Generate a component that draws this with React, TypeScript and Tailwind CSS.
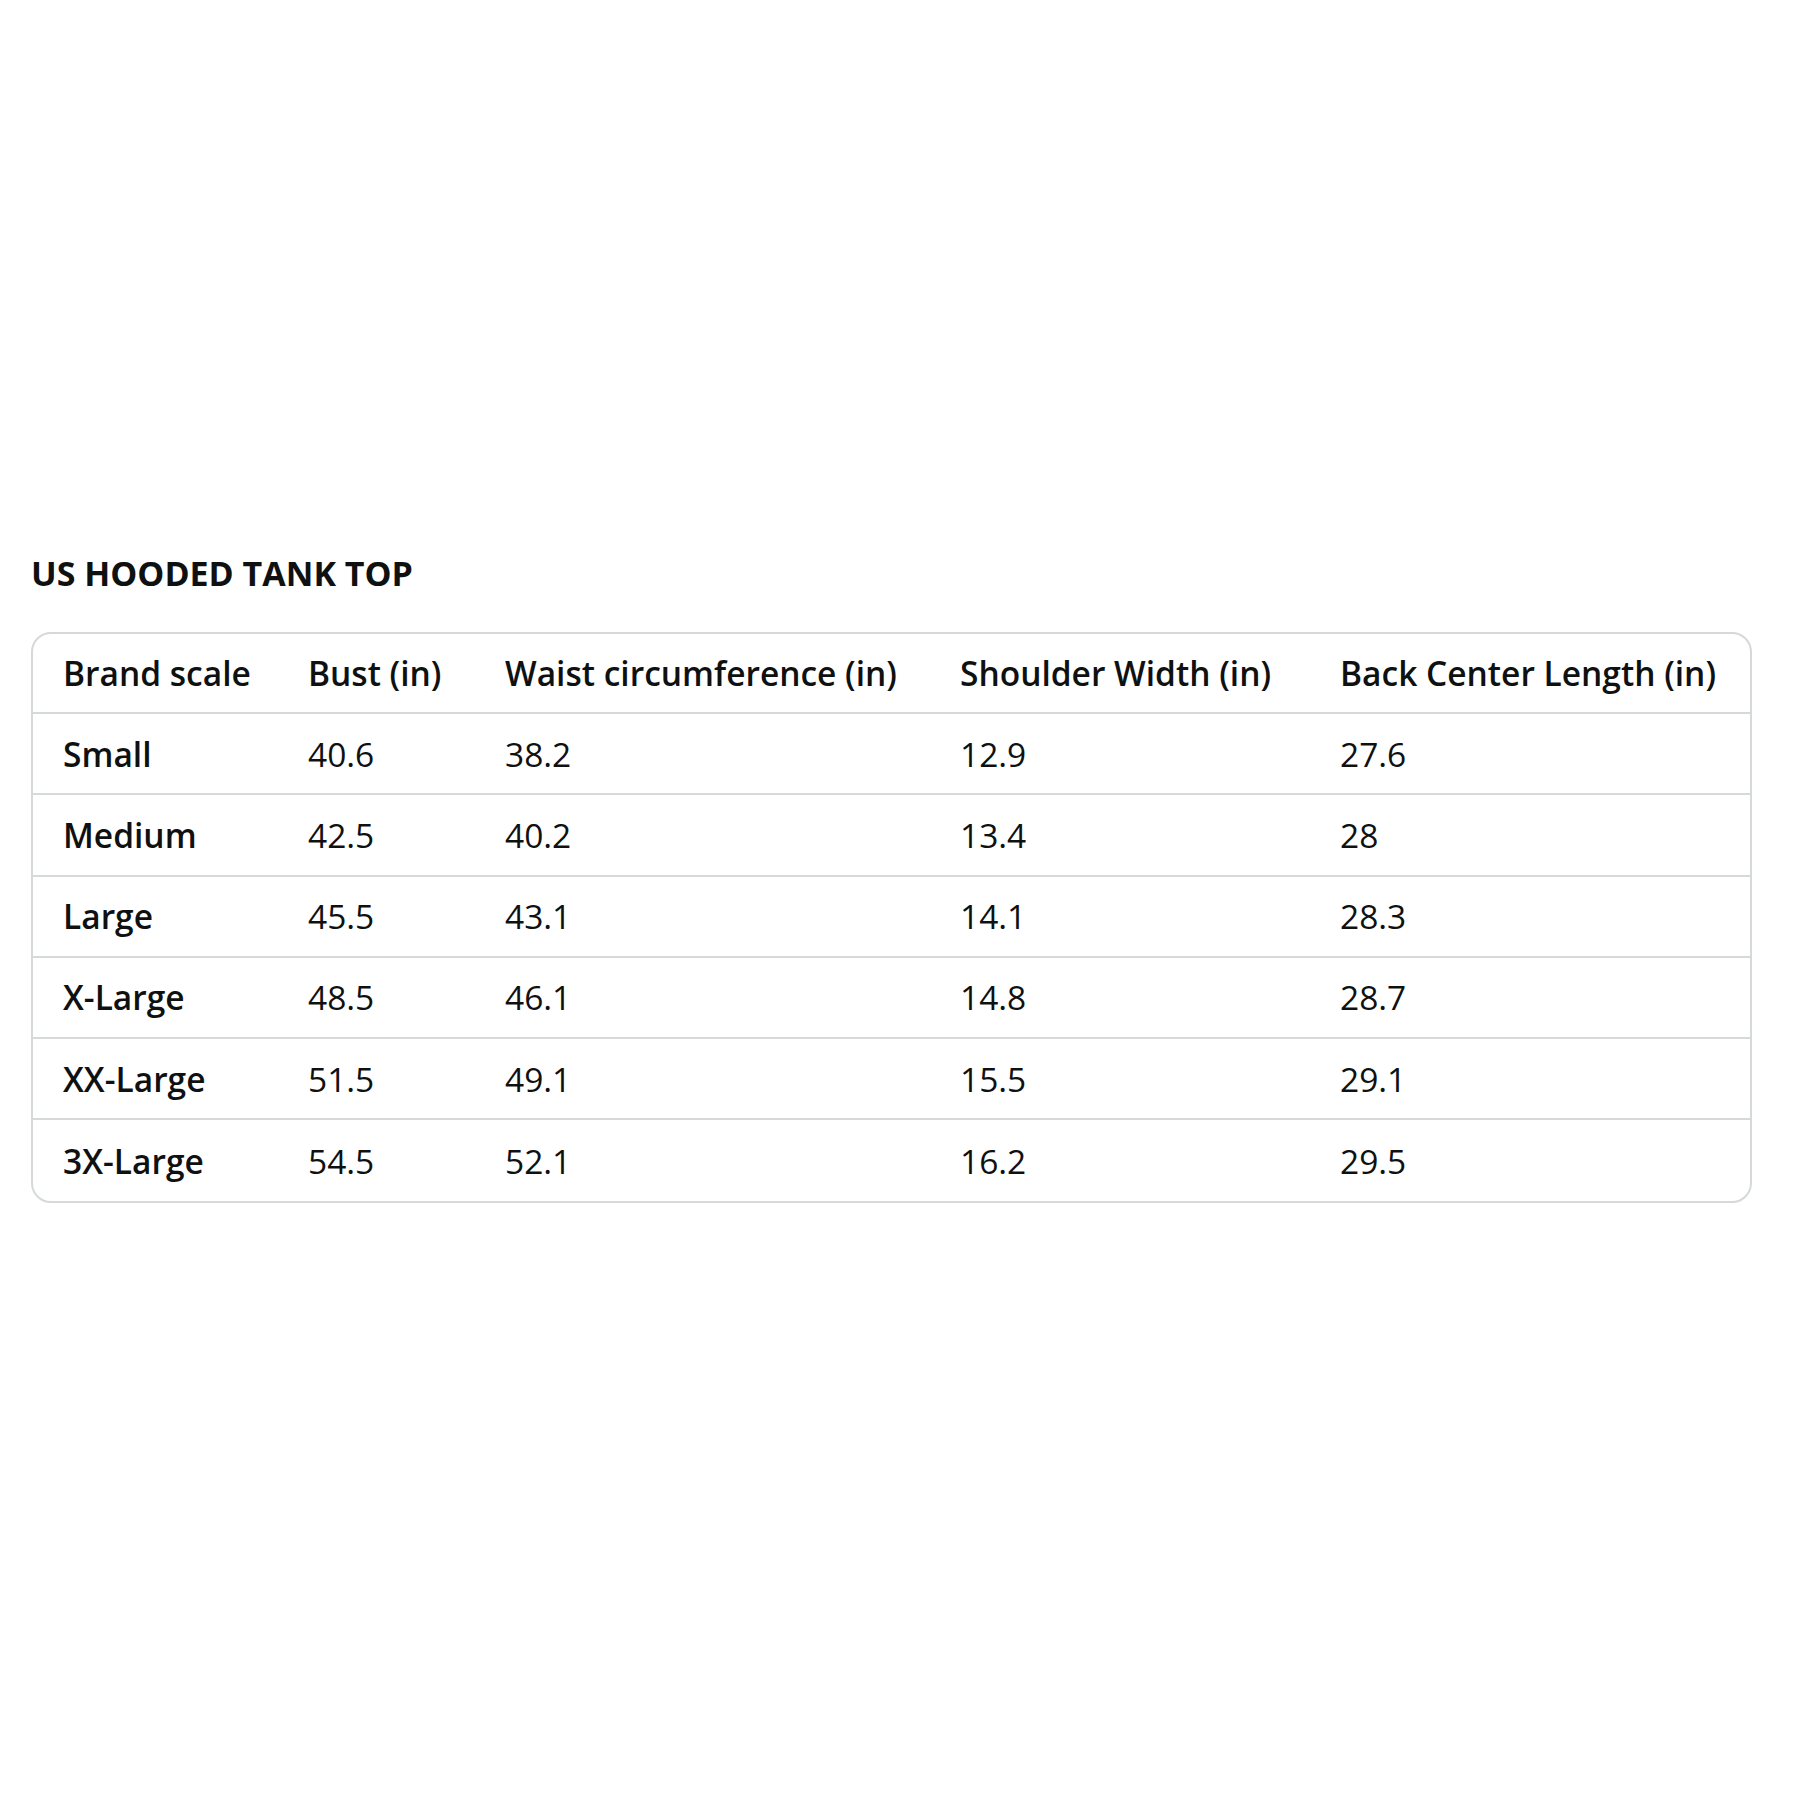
const headers = ["Brand scale", "Bust (in)", "Waist circumference (in)", "Shoulder Width (in)", "Back Center Length (in)"];

const rows = [
  ["Small", "40.6", "38.2", "12.9", "27.6"],
  ["Medium", "42.5", "40.2", "13.4", "28"],
  ["Large", "45.5", "43.1", "14.1", "28.3"],
  ["X-Large", "48.5", "46.1", "14.8", "28.7"],
  ["XX-Large", "51.5", "49.1", "15.5", "29.1"],
  ["3X-Large", "54.5", "52.1", "16.2", "29.5"],
];

const widths = ["w-[275px]", "w-[197px]", "w-[455px]", "w-[380px]", "w-auto"];

export default function App() {
  return (
    <div className="w-[1800px] h-[1800px] bg-white text-[#0f1111] font-['Open_Sans',sans-serif]">
      <div className="pt-[552px] pl-[31px]">
        <h2 className="text-[34px] font-bold leading-[42px]">US HOODED TANK TOP</h2>
        <div className="mt-[38px] border-2 border-[#d5d9d9] rounded-[20px] overflow-hidden w-[1721px]">
          <table className="w-full table-fixed border-collapse text-[33.5px]">
            <thead>
              <tr className="h-[79px]">
                {headers.map((h, i) => (
                  <th key={h} className={`${widths[i]} text-left font-semibold ${i === 0 ? "pl-[30px]" : "pl-0"} whitespace-nowrap`}>
                    {h}
                  </th>
                ))}
              </tr>
            </thead>
            <tbody>
              {rows.map((r) => (
                <tr key={r[0]} className="h-[81.3px] border-t-2 border-[#d5d9d9]">
                  {r.map((c, i) => (
                    <td key={i} className={`${i === 0 ? "pl-[30px] font-semibold" : "pl-0"} whitespace-nowrap`}>
                      {c}
                    </td>
                  ))}
                </tr>
              ))}
            </tbody>
          </table>
        </div>
      </div>
    </div>
  );
}
